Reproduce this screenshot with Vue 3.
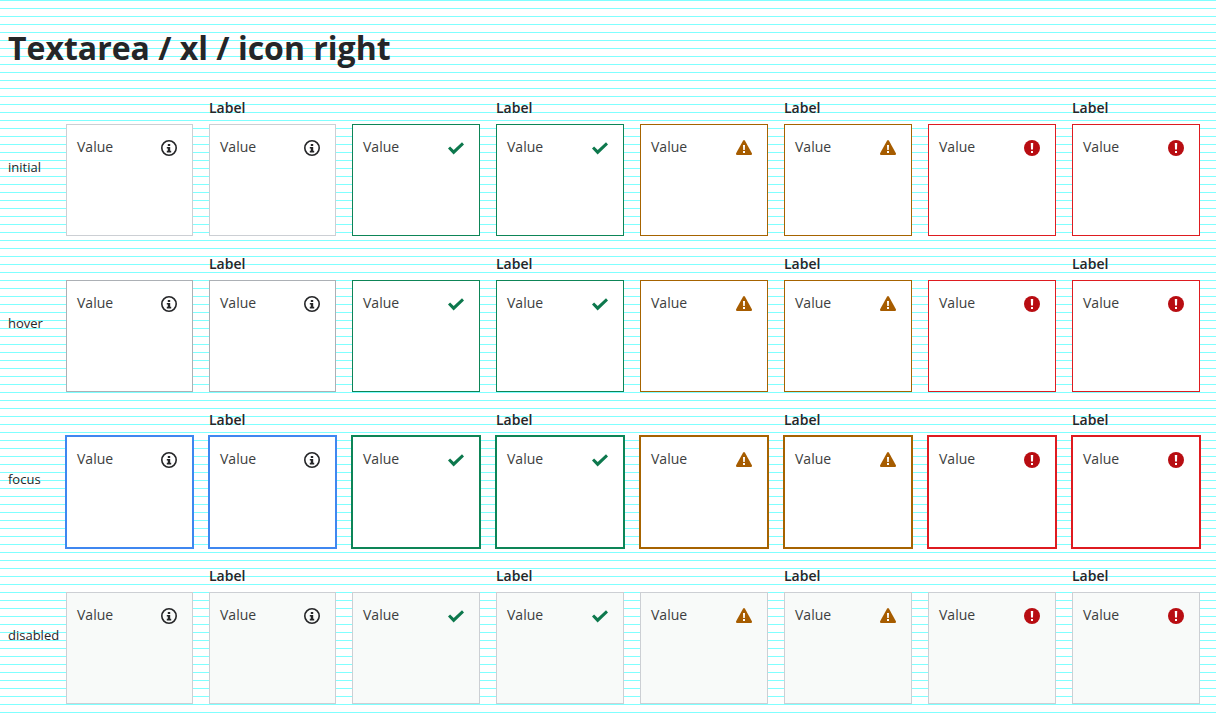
<script setup>
import { ref } from 'vue'

const kinds = ['info', 'valid', 'warning', 'error']
const columns = kinds.flatMap((kind) => [
  { kind, labelled: false },
  { kind, labelled: true },
])

const rows = ref(
  ['initial', 'hover', 'focus', 'disabled'].map((state) => ({
    state,
    fields: columns.map((column, i) => ({ ...column, id: `${state}-${i}`, value: 'Value' })),
  })),
)
</script>

<template>
  <main class="page">
    <h1 class="title">Textarea / xl / icon right</h1>
    <table class="states">
      <colgroup>
        <col class="state-column" />
        <col v-for="(column, i) in columns" :key="i" :class="`${column.kind}-column`" />
      </colgroup>
      <tbody>
        <tr v-for="row in rows" :key="row.state">
          <th scope="row" class="state">{{ row.state }}</th>
          <td v-for="field in row.fields" :key="field.id" class="cell">
            <label v-if="field.labelled" class="label" :for="field.id">Label</label>
            <div class="field" :class="[field.kind, row.state]">
              <textarea
                :id="field.id"
                v-model="field.value"
                class="input"
                :aria-label="field.labelled ? null : 'Value'"
                :disabled="row.state === 'disabled'"
              ></textarea>
              <svg class="icon" viewBox="0 0 16 16" aria-hidden="true">
                <template v-if="field.kind === 'info'">
                  <circle cx="8" cy="8" r="7.2" fill="none" stroke="currentColor" stroke-width="1.6" />
                  <path d="M6.8 3.9h2.4v2.2H6.8zM5.8 7h3.4v3.8h1v1.6H5.8v-1.6h1V8.4h-1z" fill="currentColor" />
                </template>
                <path
                  v-else-if="field.kind === 'valid'"
                  d="M14 2.3 16 4.5 5.6 14.4 0 8.6 2.1 6.4 5.7 10Z"
                  fill="currentColor"
                />
                <template v-else-if="field.kind === 'warning'">
                  <path
                    d="M7 .8q1-1.5 2 0l6.9 12.5q.5 1.7-1 1.7H1.1q-1.5 0-1-1.7Z"
                    fill="currentColor"
                  />
                  <path d="M7 5h2l-.2 5H7.2zM7 11h2v2H7z" fill="#fff" />
                </template>
                <template v-else>
                  <circle cx="8" cy="8" r="8" fill="currentColor" />
                  <path d="M6.8 3h2.4L9 9.4H7zM7 11h2v2H7z" fill="#fff" />
                </template>
              </svg>
            </div>
          </td>
        </tr>
      </tbody>
    </table>
  </main>
</template>

<style>
body {
  margin: 0;
  background: repeating-linear-gradient(#80ffff 0, #80ffff 1px, #fff 1px, #fff 8px);
}
</style>

<style scoped>
.page {
  padding: 0 8px;
  color: #252628;
  font-family: "Open Sans", "Noto Sans", sans-serif;
}

.title {
  margin: 0;
  padding: 24px 0 16px;
  font-size: 32px;
  line-height: 48px;
  font-weight: 700;
}

.states {
  width: 100%;
  table-layout: fixed;
  border-collapse: collapse;
}

.state-column {
  width: 50px;
}

.info-column {
  width: 143px;
}

.state {
  padding: 2px 0 0;
  font-size: 13px;
  font-weight: 400;
  text-align: left;
  vertical-align: middle;
}

.cell {
  padding: 8px;
  vertical-align: bottom;
}

.label {
  display: block;
  margin-bottom: 4px;
  font-size: 14px;
  line-height: 24px;
  font-weight: 600;
}

.field {
  --line: #cccfd4;
  position: relative;
}

.input {
  display: block;
  box-sizing: border-box;
  width: 100%;
  height: 112px;
  padding: 10px 40px 10px 10px;
  border: 1px solid var(--line);
  border-radius: 0;
  outline: 0;
  background: #fff;
  color: #3d3e40;
  font: 400 14px/24px "Open Sans", "Noto Sans", sans-serif;
  resize: none;
  overflow: hidden;
}

.icon {
  position: absolute;
  top: 16px;
  right: 16px;
  width: 16px;
  height: 16px;
}

.hover {
  --line: #acb0b5;
}

.focus {
  --line: #3f87f0;
}

.valid {
  --line: #0d8557;
}

.valid .icon {
  color: #0d784d;
}

.warning {
  --line: #a66300;
}

.warning .icon {
  color: #a65c00;
}

.error {
  --line: #de1b20;
}

.error .icon {
  color: #b80d12;
}

.focus .input,
.input:focus {
  box-shadow: 0 0 0 1px var(--line);
}

.disabled {
  --line: #cccfd4;
}

.disabled .input {
  background: #f8faf9;
}
</style>
